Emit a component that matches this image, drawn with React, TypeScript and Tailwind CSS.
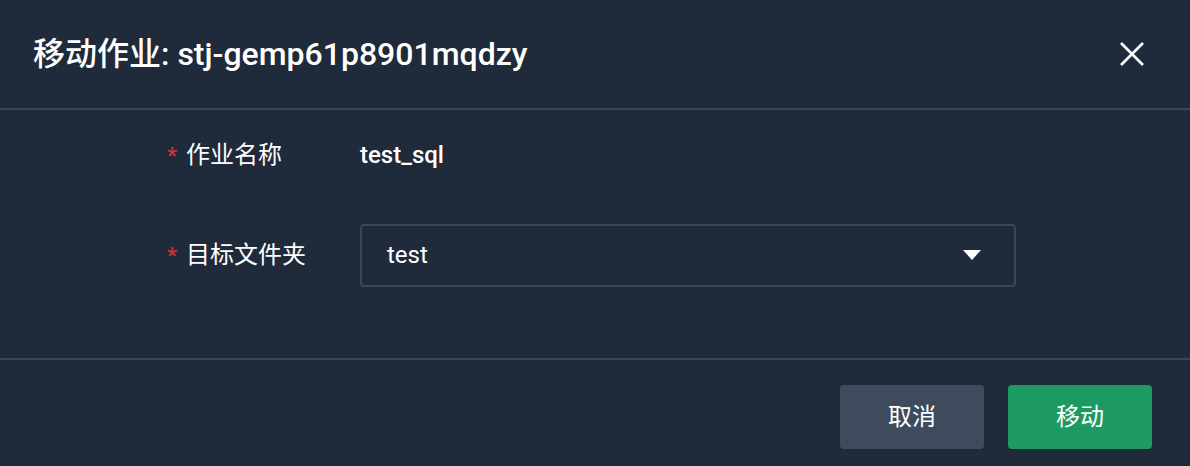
export default function App() {
  return (
    <div
      className="w-[1190px] h-[466px] bg-[#1f2b3a] text-white overflow-hidden flex flex-col"
      style={{ fontFamily: 'Roboto, "Noto Sans CJK SC", sans-serif' }}
    >
      {/* Header */}
      <div className="h-[110px] shrink-0 flex items-center justify-between pl-[33px] pr-[46px] border-b-2 border-[#3a4657]">
        <h1 className="text-[32px] font-medium leading-none">移动作业: stj-gemp61p8901mqdzy</h1>
        <button className="w-[24px] h-[24px] flex items-center justify-center" aria-label="close">
          <svg width="24" height="24" viewBox="0 0 24 24" fill="none" stroke="white" strokeWidth="2.6">
            <path d="M1 1L23 23M23 1L1 23" />
          </svg>
        </button>
      </div>

      {/* Body */}
      <div className="h-[250px] shrink-0 flex flex-col gap-[36px] pt-[13px] border-b-2 border-[#3a4657]">
        <div className="h-[64px] flex items-center">
          <div className="w-[360px] pl-[167px] flex items-center gap-[9px] text-[24px]">
            <span className="text-[#d3302f] text-[22px] font-bold">*</span>
            <span>作业名称</span>
          </div>
          <span className="text-[24px] font-medium">test_sql</span>
        </div>
        <div className="h-[64px] flex items-center">
          <div className="w-[360px] pl-[167px] flex items-center gap-[9px] text-[24px]">
            <span className="text-[#d3302f] text-[22px] font-bold">*</span>
            <span>目标文件夹</span>
          </div>
          <div className="w-[656px] h-[63px] border-2 border-[#3a4657] rounded-[4px] flex items-center justify-between pl-[25px] pr-[33px]">
            <span className="text-[24px]">test</span>
            <svg width="18" height="10" viewBox="0 0 18 10">
              <path d="M0 0H18L9 10Z" fill="white" />
            </svg>
          </div>
        </div>
      </div>

      {/* Footer */}
      <div className="flex-1 flex justify-end items-start gap-[24px] pt-[25px] pr-[38px]">
        <button className="w-[144px] h-[64px] rounded-[4px] bg-[#3d4b5d] text-[24px]">取消</button>
        <button className="w-[144px] h-[64px] rounded-[4px] bg-[#1d9a62] text-[24px]">移动</button>
      </div>
    </div>
  )
}
